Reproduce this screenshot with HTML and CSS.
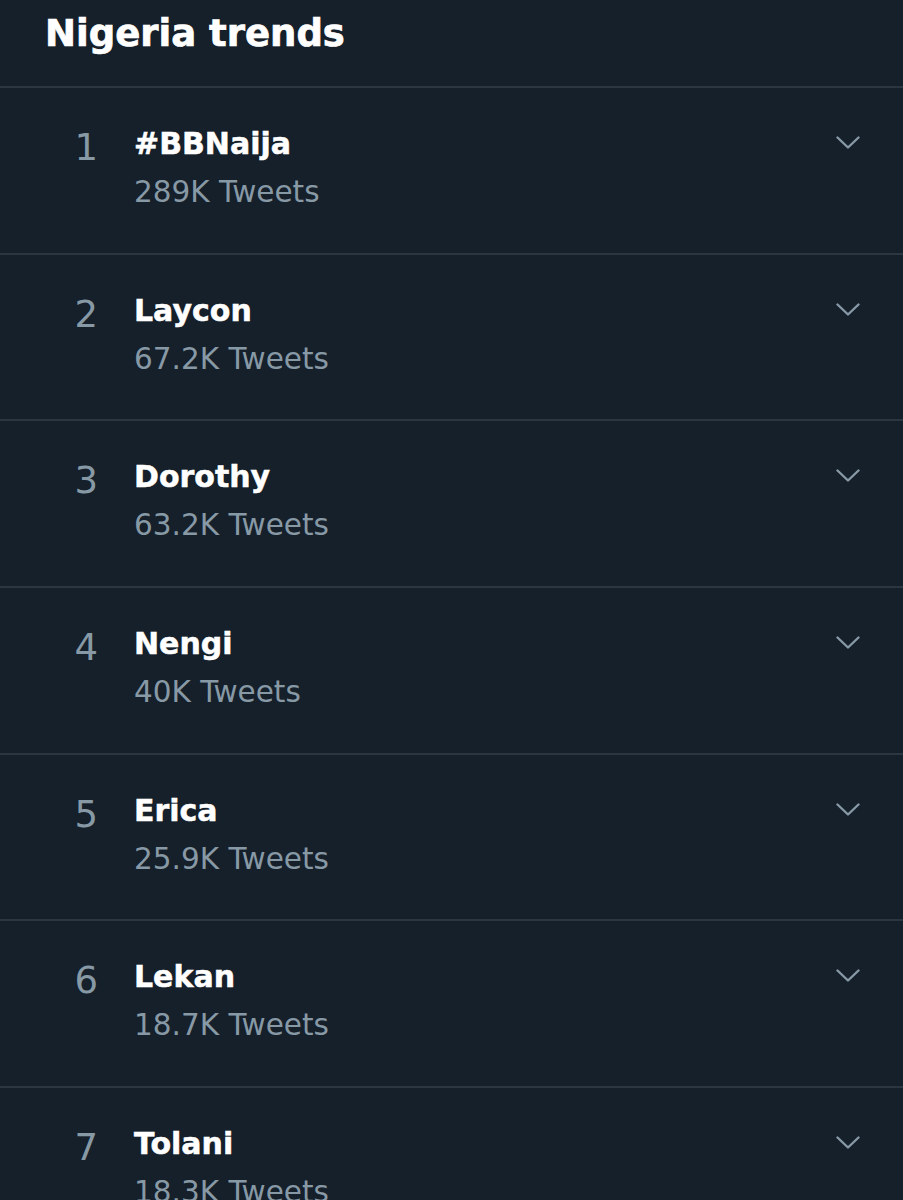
FILE: index.html
```html
<!DOCTYPE html>
<html lang="en">
<head>
    <meta charset="UTF-8">
    <meta name="viewport" content="width=device-width, initial-scale=1.0">
    <title>Nigeria trends</title>
    <link rel="stylesheet" href="styles.css">
</head>
<body>

    <div class="header">
        <h2>Nigeria trends</h2>
    </div>

    <ul class="trends">
        <li class="trend">
            <span class="rank">1</span>
            <div class="info">
                <div class="name">#BBNaija</div>
                <div class="count">289K Tweets</div>
            </div>
            <svg class="chevron" viewBox="0 0 24 13"><path d="M1.5 1.5 L12 11.5 L22.5 1.5"/></svg>
        </li>
        <li class="trend">
            <span class="rank">2</span>
            <div class="info">
                <div class="name">Laycon</div>
                <div class="count">67.2K Tweets</div>
            </div>
            <svg class="chevron" viewBox="0 0 24 13"><path d="M1.5 1.5 L12 11.5 L22.5 1.5"/></svg>
        </li>
        <li class="trend">
            <span class="rank">3</span>
            <div class="info">
                <div class="name">Dorothy</div>
                <div class="count">63.2K Tweets</div>
            </div>
            <svg class="chevron" viewBox="0 0 24 13"><path d="M1.5 1.5 L12 11.5 L22.5 1.5"/></svg>
        </li>
        <li class="trend">
            <span class="rank">4</span>
            <div class="info">
                <div class="name">Nengi</div>
                <div class="count">40K Tweets</div>
            </div>
            <svg class="chevron" viewBox="0 0 24 13"><path d="M1.5 1.5 L12 11.5 L22.5 1.5"/></svg>
        </li>
        <li class="trend">
            <span class="rank">5</span>
            <div class="info">
                <div class="name">Erica</div>
                <div class="count">25.9K Tweets</div>
            </div>
            <svg class="chevron" viewBox="0 0 24 13"><path d="M1.5 1.5 L12 11.5 L22.5 1.5"/></svg>
        </li>
        <li class="trend">
            <span class="rank">6</span>
            <div class="info">
                <div class="name">Lekan</div>
                <div class="count">18.7K Tweets</div>
            </div>
            <svg class="chevron" viewBox="0 0 24 13"><path d="M1.5 1.5 L12 11.5 L22.5 1.5"/></svg>
        </li>
        <li class="trend">
            <span class="rank">7</span>
            <div class="info">
                <div class="name">Tolani</div>
                <div class="count">18.3K Tweets</div>
            </div>
            <svg class="chevron" viewBox="0 0 24 13"><path d="M1.5 1.5 L12 11.5 L22.5 1.5"/></svg>
        </li>
    </ul>

</body>
</html>
```

FILE: styles.css
```css
* {
    margin: 0;
    padding: 0;
    box-sizing: border-box;
}

body {
    font-family: "DejaVu Sans", sans-serif;
    background: #15202b;
    color: #ffffff;
    width: 903px;
    height: 1200px;
    overflow: hidden;
}

.header {
    height: 88px;
    padding: 12px 0 0 45px;
    border-bottom: 2px solid #2b3641;
}

h2 {
    font-size: 37px;
    font-weight: 700;
    line-height: 44px;
    -webkit-text-stroke: 0.7px #ffffff;
}

.trends {
    list-style: none;
}

.trend {
    display: flex;
    align-items: flex-start;
    height: 166.67px;
    padding: 38px 43px 0 45px;
    border-bottom: 2px solid #2b3641;
}

.rank {
    width: 89px;
    padding-right: 36px;
    text-align: right;
    font-size: 37px;
    line-height: 43px;
    color: #8899a6;
}

.info {
    flex: 1;
}

.name {
    font-size: 30px;
    font-weight: 700;
    line-height: 36px;
    -webkit-text-stroke: 0.5px #ffffff;
}

.count {
    margin-top: 12px;
    font-size: 29.5px;
    line-height: 36px;
    color: #8899a6;
}

.chevron {
    width: 24px;
    height: 13px;
    margin-top: 10px;
    fill: none;
    stroke: #8899a6;
    stroke-width: 2.4;
    stroke-linecap: round;
    stroke-linejoin: round;
}
```
